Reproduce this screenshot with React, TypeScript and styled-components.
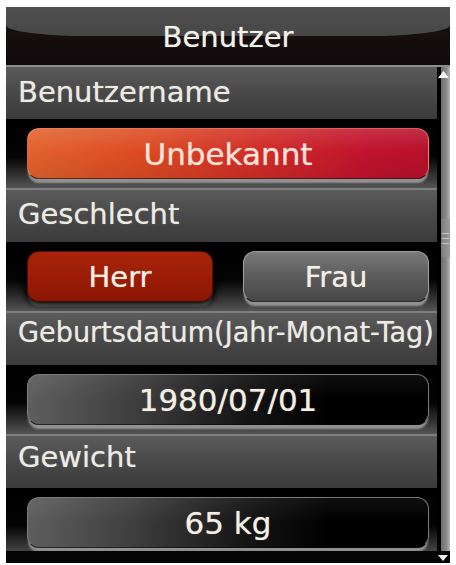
import React from "react";
import styled, { createGlobalStyle } from "styled-components";

const Global = createGlobalStyle`
  html, body { margin: 0; padding: 0; background: #ffffff; }
  body { font-family: "DejaVu Sans", "Open Sans", sans-serif; }
`;

const Page = styled.div`
  width: 456px;
  height: 565px;
  padding: 7px 6px 0 6px;
  box-sizing: border-box;
`;

const Panel = styled.div`
  width: 444px;
  height: 556px;
  background: #0c0c0c;
  display: flex;
  flex-direction: column;
  overflow: hidden;
`;

const Header = styled.div`
  position: relative;
  height: 52px;
  flex: none;
  background: linear-gradient(#1a1314, #0f0a0b);
  border-bottom: 2px solid #8d8d8d;
  display: flex;
  align-items: center;
  justify-content: center;
  padding-top: 6px;
  box-sizing: content-box;
  &::before {
    content: "";
    position: absolute;
    left: 0;
    right: 0;
    top: 0;
    height: 29px;
    background: linear-gradient(#505050, #464646);
    border-bottom-left-radius: 80px 11px;
    border-bottom-right-radius: 80px 11px;
  }
`;

const HeaderTitle = styled.span`
  position: relative;
  margin-top: -5px;
  font-size: 29px;
  line-height: 36px;
  color: #f3f1e6;
  text-shadow: 0 0 1px rgba(255, 255, 255, 0.6);
`;

const Body = styled.div`
  flex: none;
  height: 484px;
  display: flex;
`;

const Content = styled.div`
  flex: 1;
  display: flex;
  flex-direction: column;
  overflow: hidden;
`;

const Section = styled.div<{ $first?: boolean }>`
  flex: none;
  display: flex;
  flex-direction: column;
  border-top: ${(p) => (p.$first ? "none" : "2px solid #7e7e7e")};
`;

const Label = styled.div<{ $pad: number }>`
  height: 52px;
  box-sizing: border-box;
  padding: ${(p) => p.$pad}px 0 0 12px;
  background: linear-gradient(#5b5b5b 0%, #4a4a4a 45%, #3b3b3b 100%);
  overflow: hidden;
  white-space: nowrap;
`;

const LabelText = styled.span<{ $squeeze?: number }>`
  display: inline-block;
  font-size: 29px;
  line-height: 36px;
  color: #ebebe4;
  text-shadow: 0 0 1px rgba(255, 255, 255, 0.55);
  transform: scaleX(${(p) => p.$squeeze ?? 1});
  transform-origin: left center;
`;

const Row = styled.div`
  height: 69px;
  box-sizing: border-box;
  padding: 0 8px 0 21px;
  display: flex;
  align-items: center;
  background: linear-gradient(#000 0%, #040404 55%, #383838 85%, #555 100%);
`;

const Pair = styled.div`
  flex: 1;
  display: grid;
  grid-template-columns: 1fr 1fr;
  gap: 30px;
`;

type Kind = "accent" | "active" | "plain" | "dark";

const backgrounds: Record<Kind, string> = {
  accent:
    "linear-gradient(rgba(255,255,255,0.12), rgba(255,255,255,0) 45%, rgba(0,0,0,0.08)), linear-gradient(90deg, #e2622d 0%, #dc4a22 30%, #cf2a28 60%, #c0132e 85%, #b8102c 100%)",
  active: "linear-gradient(#a82309 0%, #9a1c06 55%, #8a1604 100%)",
  plain: "linear-gradient(#7a7a7a 0%, #5e5e5e 45%, #474747 100%)",
  dark:
    "linear-gradient(rgba(255,255,255,0.06), rgba(255,255,255,0) 50%), linear-gradient(90deg, #5e5e5e 0%, #404040 25%, #141414 55%, #000 75%, #000 100%)",
};

const borders: Record<Kind, string> = {
  accent: "1px solid rgba(255, 160, 120, 0.55)",
  active: "1px solid #5c0d02",
  plain: "1px solid #a0a0a0",
  dark: "1px solid #7a7a7a",
};

const Field = styled.div<{ $kind: Kind }>`
  flex: 1;
  height: 51px;
  box-sizing: border-box;
  border-radius: 12px;
  background: ${(p) => backgrounds[p.$kind]};
  border: ${(p) => borders[p.$kind]};
  border-bottom-color: rgba(0, 0, 0, 0.6);
  box-shadow: ${(p) =>
    p.$kind === "active"
      ? "0 0 6px 3px #000, 0 5px 2px -1px rgba(190,190,190,0.55)"
      : "0 5px 2px -1px rgba(200,200,200,0.6)"};
  display: flex;
  align-items: center;
  justify-content: center;
  font-size: ${(p) => (p.$kind === "active" || p.$kind === "plain" ? 29 : 31)}px;
  color: ${(p) => (p.$kind === "accent" ? "#ffe2d8" : "#f3efe2")};
  text-shadow: 0 0 1px rgba(255, 255, 255, 0.6);
  white-space: nowrap;
`;

const Scroll = styled.div`
  flex: none;
  width: 13px;
  display: flex;
  flex-direction: column;
  border-left: 4px solid #000;
  box-sizing: border-box;
  background: linear-gradient(90deg, #6e6e6e, #8a8a8a 60%, #b5b5b5);
`;

const ScrollArrow = styled.div`
  height: 14px;
  margin-left: -4px;
  padding-top: 3px;
  display: flex;
  justify-content: center;
`;

const Thumb = styled.div`
  margin-top: 135px;
  height: 38px;
  display: flex;
  flex-direction: column;
  justify-content: center;
  gap: 4px;
  background: linear-gradient(90deg, #7c7c7c, #9c9c9c);
`;

const Grip = styled.div`
  height: 1px;
  margin: 0 1px;
  background: #c8c8c8;
`;

const Footer = styled.div`
  flex: 1;
  background: #050505;
  display: flex;
  justify-content: flex-end;
  align-items: flex-end;
  padding: 0 1px 1px 0;
`;

const Up = () => (
  <svg width="13" height="9" viewBox="0 0 13 9">
    <polygon points="1,8 6.5,1 12,8" fill="#f4f4f4" />
  </svg>
);

const Down = () => (
  <svg width="12" height="8" viewBox="0 0 12 8">
    <polygon points="1,1 11,1 6,7" fill="#f0f0f0" />
  </svg>
);

export default function App() {
  return (
    <>
      <Global />
      <Page>
        <Panel>
          <Header>
            <HeaderTitle>Benutzer</HeaderTitle>
          </Header>
          <Body>
            <Content>
              <Section $first>
                <Label $pad={7}>
                  <LabelText>Benutzername</LabelText>
                </Label>
                <Row>
                  <Field $kind="accent">Unbekannt</Field>
                </Row>
              </Section>
              <Section>
                <Label $pad={6}>
                  <LabelText>Geschlecht</LabelText>
                </Label>
                <Row>
                  <Pair>
                    <Field $kind="active">Herr</Field>
                    <Field $kind="plain">Frau</Field>
                  </Pair>
                </Row>
              </Section>
              <Section>
                <Label $pad={1}>
                  <LabelText $squeeze={0.935}>Geburtsdatum(Jahr-Monat-Tag)</LabelText>
                </Label>
                <Row>
                  <Field $kind="dark">1980/07/01</Field>
                </Row>
              </Section>
              <Section>
                <Label $pad={3}>
                  <LabelText>Gewicht</LabelText>
                </Label>
                <Row>
                  <Field $kind="dark">65 kg</Field>
                </Row>
              </Section>
            </Content>
            <Scroll>
              <ScrollArrow>
                <Up />
              </ScrollArrow>
              <Thumb>
                <Grip />
                <Grip />
                <Grip />
              </Thumb>
            </Scroll>
          </Body>
          <Footer>
            <Down />
          </Footer>
        </Panel>
      </Page>
    </>
  );
}
